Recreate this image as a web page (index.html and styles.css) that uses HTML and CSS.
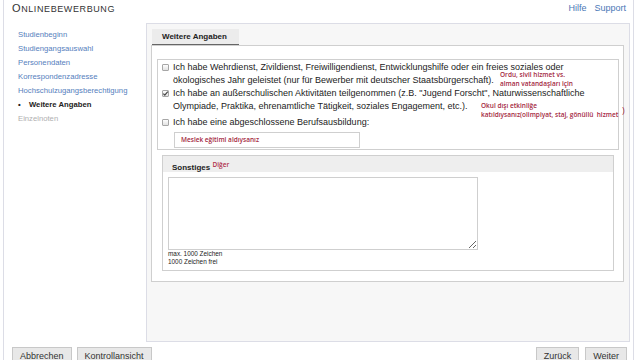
FILE: index.html
```html
<!DOCTYPE html>
<html lang="de">
<head>
    <meta charset="UTF-8">
    <meta name="viewport" content="width=device-width, initial-scale=1.0">
    <title>Onlinebewerbung</title>
    <link rel="stylesheet" href="styles.css">
</head>
<body>
    <div class="page">
        <header class="top">
            <h1 class="title"><span class="big">O</span>NLINEBEWERBUNG</h1>
            <nav class="help">
                <a href="#">Hilfe</a>
                <a href="#">Support</a>
            </nav>
        </header>

        <div class="main">
            <ul class="steps">
                <li><a href="#">Studienbeginn</a></li>
                <li><a href="#">Studiengangsauswahl</a></li>
                <li><a href="#">Personendaten</a></li>
                <li><a href="#">Korrespondenzadresse</a></li>
                <li><a href="#">Hochschulzugangsberechtigung</a></li>
                <li class="current">Weitere Angaben</li>
                <li class="off">Einzelnoten</li>
            </ul>

            <section class="panel">
                <div class="tabs">
                    <span class="tab">Weitere Angaben</span>
                </div>
                <div class="tab-body">
                    <div class="checks">
                        <label class="check">
                            <span class="cb"></span>
                            <span class="label">Ich habe Wehrdienst, Zivildienst, Freiwilligendienst, Entwicklungshilfe oder ein freies soziales oder ökologisches Jahr geleistet (nur für Bewerber mit deutscher Staatsbürgerschaft).</span>
                        </label>
                        <label class="check">
                            <span class="cb checked">
                                <svg viewBox="0 0 8 8" width="7" height="7"><path d="M1.5 4.2 L3.2 5.9 L6.6 1.8" fill="none" stroke="#444" stroke-width="1.3"/></svg>
                            </span>
                            <span class="label">Ich habe an außerschulischen Aktivitäten teilgenommen (z.B. "Jugend Forscht", Naturwissenschaftliche Olympiade, Praktika, ehrenamtliche Tätigkeit, soziales Engagement, etc.).</span>
                        </label>
                        <label class="check gap">
                            <span class="cb"></span>
                            <span class="label">Ich habe eine abgeschlossene Berufsausbildung:</span>
                        </label>
                        <div class="job">Meslek eğitimi aldıysanız</div>

                        <!-- notes written over the form -->
                        <p class="note note-a">Ordu, sivil hizmet vs.<br>alman vatandaşları için</p>
                        <p class="note note-b">Okul dışı etkinliğe<br>katıldıysanız(olimpiyat, staj, gönüllü&nbsp; hizmet</p>
                        <span class="note paren">)</span>
                    </div>

                    <div class="other">
                        <div class="other-head">Sonstiges <span class="note-inline">Diğer</span></div>
                        <div class="other-body">
                            <textarea class="text"></textarea>
                            <p class="hint">max. 1000 Zeichen<br>1000 Zeichen frei</p>
                        </div>
                    </div>
                </div>
            </section>
        </div>

        <footer class="actions">
            <div class="left">
                <button>Abbrechen</button>
                <button>Kontrollansicht</button>
            </div>
            <div class="right">
                <button>Zurück</button>
                <button>Weiter</button>
            </div>
        </footer>
    </div>
</body>
</html>
```

FILE: styles.css
```css
body {
    margin: 0;
    font-family: "Liberation Sans", Arial, sans-serif;
    color: #222;
    background: #fff;
}
.page {
    margin-left: 3px;
    width: 629px;
    min-height: 360px;
    border-left: 1px solid #dcdde6;
    border-right: 1px solid #dcdde6;
}
.top {
    height: 23px;
    display: flex;
    justify-content: space-between;
    align-items: flex-start;
}
.title {
    margin: 3px 0 0 8px;
    font-size: 9px;
    font-weight: normal;
    letter-spacing: 0.6px;
    line-height: 11px;
    color: #333;
}
.title .big {
    font-size: 11px;
}
.help {
    margin: 3px 7px 0 0;
    font-size: 9px;
    line-height: 11px;
    display: flex;
    gap: 8px;
}
.help a {
    color: #4a77b6;
    text-decoration: none;
}
.main {
    display: flex;
}
.steps {
    width: 128px;
    margin: 0;
    padding: 5px 0 0 14px;
    list-style: none;
    font-size: 7.7px;
    line-height: 14px;
}
.steps a {
    color: #5580bd;
    text-decoration: none;
}
.steps .current {
    font-weight: bold;
    color: #222;
}
.steps .current::before {
    content: "\2022";
    display: inline-block;
    width: 11px;
}
.steps .off {
    color: #b0b0b0;
}
.panel {
    flex: 1;
    height: 319px;
    box-sizing: border-box;
    margin-right: 3px;
    padding: 5px 5px 0 4px;
    border: 1px solid #dcdde6;
    background: #f7f7f7;
}
.tabs {
    display: flex;
    padding-left: 1px;
}
.tab {
    width: 77px;
    height: 15px;
    padding-left: 10px;
    border-bottom: 1px solid #666;
    background: #ececec;
    font-size: 8px;
    font-weight: bold;
    line-height: 15px;
}
.tab-body {
    height: 237px;
    box-sizing: border-box;
    border: 1px solid #cfcfcf;
    background: #fff;
    padding: 13px 4px 0 5px;
}
.checks {
    position: relative;
    height: 91px;
    box-sizing: border-box;
    border: 1px solid #cfcfcf;
    padding: 1px 4px 0 4px;
    font-size: 9px;
    line-height: 13px;
}
.check {
    display: flex;
    align-items: flex-start;
}
.check.gap {
    margin-top: 3px;
}
.cb {
    flex: none;
    width: 5px;
    height: 5px;
    margin: 3px 4px 0 0;
    border: 1px solid #a6a6a6;
    border-radius: 1px;
    background: linear-gradient(#fdfdfd, #e2e2e2);
    display: flex;
    align-items: center;
    justify-content: center;
}
.cb svg {
    flex: none;
}
.label {
    color: #222;
}
.job {
    width: 178px;
    height: 14px;
    margin: 3px 0 0 12px;
    padding-left: 6px;
    border: 1px solid #cfcfcf;
    font-family: "Open Sans", sans-serif;
    font-size: 6.5px;
    font-weight: 600;
    line-height: 14px;
    color: #a4293f;
}
.note {
    position: absolute;
    margin: 0;
    font-family: "Open Sans", sans-serif;
    font-size: 6.5px;
    font-weight: 600;
    line-height: 9px;
    color: #a4293f;
    white-space: nowrap;
}
.note-a {
    left: 342px;
    top: 10px;
}
.note-b {
    left: 323px;
    top: 41px;
}
.paren {
    left: 464px;
    top: 46px;
    font-size: 9px;
    font-weight: normal;
    line-height: 10px;
}
.other {
    margin: 5px 5px 0 5px;
    border: 1px solid #cfcfcf;
}
.other-head {
    height: 16px;
    padding-left: 9px;
    background: #eeeeee;
    font-size: 8px;
    font-weight: bold;
    line-height: 18px;
}
.note-inline {
    font-family: "Open Sans", sans-serif;
    font-size: 6.5px;
    font-weight: 600;
    vertical-align: 3px;
    color: #b0304c;
}
.other-body {
    padding: 5px 5px 4px 5px;
}
.text {
    display: block;
    width: 310px;
    height: 73px;
    box-sizing: border-box;
    margin: 0;
    border: 1px solid #cfcfcf;
    resize: both;
}
.hint {
    margin: 0;
    font-size: 6.4px;
    line-height: 8px;
    color: #222;
}
.actions {
    display: flex;
    justify-content: space-between;
    margin-top: 5px;
    padding: 0 6px 0 8px;
}
.left {
    display: flex;
    gap: 5px;
}
.right {
    display: flex;
    gap: 6px;
}
button {
    height: 18px;
    padding: 0 7px;
    border: 1px solid #c8c8c8;
    background: #e8e8e8;
    font-family: "Liberation Sans", Arial, sans-serif;
    font-size: 9px;
    color: #333;
}
```
